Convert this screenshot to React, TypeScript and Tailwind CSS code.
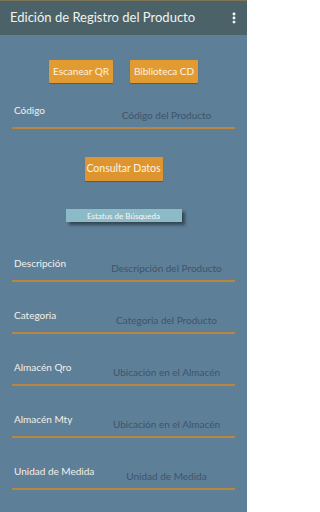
import { EllipsisVertical } from "lucide-react";

const fields = [
    { label: "Descripción", placeholder: "Descripción del Producto" },
    { label: "Categoria", placeholder: "Categoria del Producto" },
    { label: "Almacén Qro", placeholder: "Ubicación en el Almacén" },
    { label: "Almacén Mty", placeholder: "Ubicación en el Almacén" },
    { label: "Unidad de Medida", placeholder: "Unidad de Medida" },
];

const Field = ({ label, placeholder }: { label: string; placeholder: string }) => (
    <div className="mx-[12px] flex flex-col">
        <div className="flex h-[27px]">
            <div className="w-[86px] pl-[2px] pt-[4px] text-[10px] leading-[12px] text-[#f1f1ec]">
                {label}
            </div>
            <div className="flex-1 pt-[9px] text-center text-[10px] leading-[12px] text-[#3f5468]">
                {placeholder}
            </div>
        </div>
        <div className="h-[2px] bg-[#b9863f]" />
    </div>
);

const App = () => {
    return (
        <div className="flex h-[512px] w-[247px] flex-col bg-[#5e7f98] font-['Lato',sans-serif]">
            <header className="flex h-[35px] items-center justify-between border-t border-[#7d7456] bg-[#4b6269] pl-[10px] pr-[6px]">
                <h1 className="text-[13px] text-[#f3f3ee]">Edición de Registro del Producto</h1>
                <EllipsisVertical className="h-[14px] w-[14px] text-white" strokeWidth={3} />
            </header>

            <div className="mt-[25px] flex justify-center gap-[17px]">
                <button className="h-[23px] w-[64px] rounded-[1px] bg-[#e29b31] text-[10px] text-[#fdf3e0] shadow-[0_1px_1px_rgba(0,0,0,0.25)]">
                    Escanear QR
                </button>
                <button className="h-[23px] w-[68px] rounded-[1px] bg-[#e29b31] text-[10px] text-[#fdf3e0] shadow-[0_1px_1px_rgba(0,0,0,0.25)]">
                    Biblioteca CD
                </button>
            </div>

            <div className="mt-[17px] flex flex-col">
                <Field label="Código" placeholder="Código del Producto" />
            </div>

            <div className="mt-[28px] flex justify-center">
                <button className="h-[24px] w-[78px] rounded-[1px] bg-[#de952f] text-[10.5px] text-[#fdf3e0] shadow-[0_1px_1px_rgba(0,0,0,0.25)]">
                    Consultar Datos
                </button>
            </div>

            <div className="mt-[28px] flex justify-center">
                <div className="flex h-[13px] w-[116px] items-center justify-center bg-[#8cbac7] text-[8px] text-[#f5f8f8] shadow-[3px_3px_3px_rgba(0,0,0,0.45)]">
                    Estatus de Búsqueda
                </div>
            </div>

            <div className="mt-[31px] flex flex-col gap-[23px]">
                {fields.map((f) => (
                    <Field key={f.label} label={f.label} placeholder={f.placeholder} />
                ))}
            </div>
        </div>
    );
};

export default App;
